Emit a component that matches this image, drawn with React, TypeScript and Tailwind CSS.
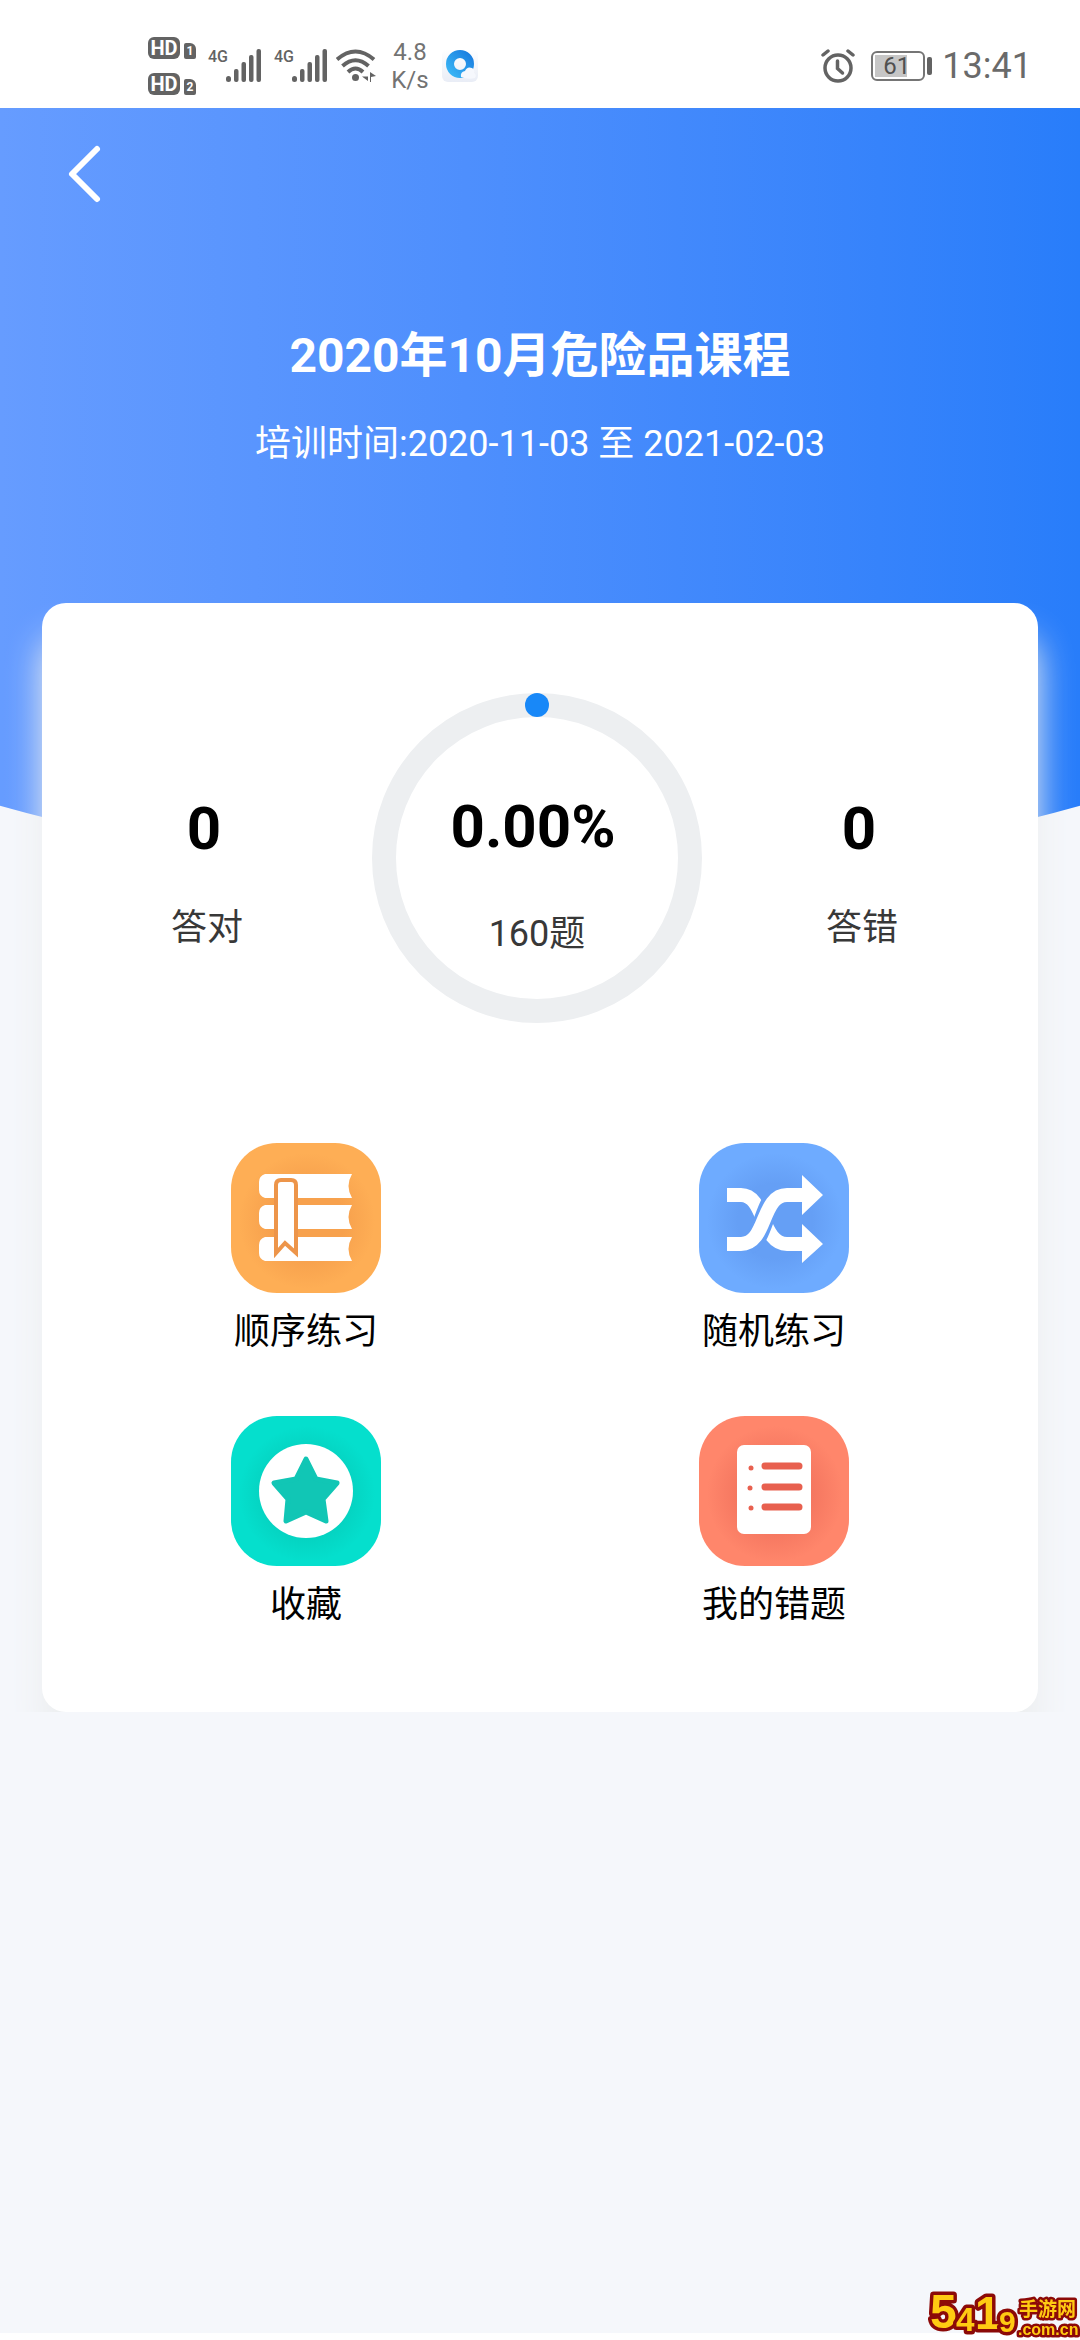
import React from "react";

function SimBadge({ slot }: { slot: string }) {
  return (
    <div className="flex items-end gap-1">
      <span className="flex h-[22px] w-8 items-center justify-center rounded-md bg-[#636363] text-xl leading-none font-bold text-white">
        HD
      </span>
      <span className="flex h-4 w-3 items-center justify-center rounded-xs rounded-tr-md bg-[#636363] text-xs leading-none font-bold text-white">
        {slot}
      </span>
    </div>
  );
}

function Signal() {
  return (
    <div className="flex items-start">
      <span className="w-[18px] font-[Roboto,sans-serif] text-base leading-4 font-medium">4G</span>
      <svg width="36" height="34" viewBox="0 0 36 34" fill="#636363" aria-hidden="true">
        <rect x="0" y="27" width="5" height="6" rx="2.5" />
        <rect x="8" y="20" width="4.5" height="13" rx="2" />
        <rect x="15.500" y="13" width="4.500" height="20" rx="2" />
        <rect x="23" y="6" width="4.500" height="27" rx="2" />
        <rect x="30.500" y="0" width="4.500" height="33" rx="2" />
      </svg>
    </div>
  );
}

function WifiIcon() {
  return (
    <svg width="40" height="34" viewBox="0 0 40 34" fill="none" stroke="#636363" strokeWidth="4" aria-hidden="true">
      <path d="M1 10.500Q19.500 -5.500 38 10.500" />
      <path d="M6.500 17Q19.500 5.500 32.500 17" />
      <path d="M12 23Q19.500 16 27 23" />
      <circle cx="19.500" cy="28.500" r="3.500" fill="#636363" stroke="none" />
      <path d="M32 23v9l-6-4.500h6zM34 23l6 4-5 1v5h-1z" fill="#636363" stroke="none" />
    </svg>
  );
}

function BrowserIcon() {
  return (
    <svg width="36" height="34" viewBox="0 0 36 34" aria-hidden="true">
      <defs>
        <linearGradient id="qb" x1="0" y1="1" x2="1" y2="0">
          <stop offset="0" stopColor="#39b5f5" />
          <stop offset="1" stopColor="#1a7fe0" />
        </linearGradient>
        <linearGradient id="qbg" x1="0" y1="0" x2="0" y2="1">
          <stop offset="0" stopColor="#ffffff" />
          <stop offset="1" stopColor="#e9edf6" />
        </linearGradient>
      </defs>
      <rect width="36" height="33" rx="6" fill="url(#qbg)" />
      <circle cx="18" cy="15" r="10" fill="none" stroke="url(#qb)" strokeWidth="8" />
      <path d="M19 28q-1-5 4-6q2-5 7-3q3 2 2 5q3 2 1 5q-7 2-14-1z" fill="#f6f8fd" />
    </svg>
  );
}

function AlarmIcon() {
  return (
    <svg width="34" height="34" viewBox="0 0 34 34" fill="none" stroke="#636363" strokeLinecap="round" aria-hidden="true">
      <circle cx="17" cy="19" r="13" strokeWidth="3.500" />
      <path d="M16.500 12v7.500l5 4.500" strokeWidth="3.500" />
      <path d="M2 6l5-4M32 6l-5-4" strokeWidth="3.500" />
    </svg>
  );
}

function StatusBar() {
  return (
    <div className="flex h-[108px] items-center justify-between bg-white pt-6 pr-12 pl-[148px] text-[#636363]">
      <div className="flex items-center">
        <div className="flex flex-col gap-3.5">
          <SimBadge slot="1" />
          <SimBadge slot="2" />
        </div>
        <div className="ml-3 flex gap-3">
          <Signal />
          <Signal />
        </div>
        <div className="ml-2">
          <WifiIcon />
        </div>
        <div className="mr-1.5 ml-2 flex w-[52px] flex-col text-center text-2xl leading-7 text-[#737373]">
          <span>4.8</span>
          <span>K/s</span>
        </div>
        <BrowserIcon />
      </div>
      <div className="flex items-center">
        <AlarmIcon />
        <div className="ml-4 flex h-[30px] w-[54px] rounded-md border-2 border-[#757575] p-0.5">
          <div className="flex h-full w-8 items-center bg-[#c6c6c6] pl-2 text-2xl leading-none text-[#505050]">61</div>
        </div>
        <div className="ml-0.5 h-[18px] w-[5px] rounded-xs bg-[#636363]" />
        <span className="ml-2.5 text-4xl leading-[44px] text-[#6a6a6a]">13:41</span>
      </div>
    </div>
  );
}

function Tile({ id, color, shade, children }: { id: string; color: string; shade: string; children: React.ReactNode }) {
  return (
    <svg width="150" height="150" viewBox="0 0 150 150" aria-hidden="true">
      <defs>
        <radialGradient id={id}>
          <stop offset="0.55" stopColor={shade} />
          <stop offset="1" stopColor={color} />
        </radialGradient>
      </defs>
      <rect width="150" height="150" rx="46" fill={color} />
      <circle cx="76" cy="78" r="68" fill={`url(#${id})`} />
      {children}
    </svg>
  );
}

function BooksIcon() {
  const book = "M34 0H121Q114 12 121 24H34Q28 22 28 16V8Q28 2 34 0Z";
  return (
    <Tile id="books" color="#feae55" shade="#f7a14d">
      <g fill="#fff">
        <path d={book} transform="translate(0 31)" />
        <path d={book} transform="translate(0 62)" />
        <path d={book} transform="translate(0 94)" />
      </g>
      <path d="M45 110V42Q45 37 50 37H60Q65 37 65 42V110L54 100Z" fill="#fff" stroke="#ed954a" strokeWidth="4" />
    </Tile>
  );
}

function ShuffleIcon() {
  return (
    <Tile id="shuffle" color="#6eabff" shade="#659ff5">
      <path d="M28 52H42C66 52 62 101 88 101H104" fill="none" stroke="#fff" strokeWidth="14" />
      <path d="M50 101C64 96 66 57 80 52" fill="none" stroke="#659ff5" strokeWidth="20" />
      <path d="M28 101H42C68 101 62 52 88 52H104" fill="none" stroke="#fff" strokeWidth="14" />
      <path d="M103 32L124 52L103 72ZM103 81L124 101L103 120Z" fill="#fff" />
    </Tile>
  );
}

function StarIcon() {
  return (
    <Tile id="star" color="#05dfcd" shade="#05d0be">
      <circle cx="75" cy="75" r="47" fill="#fff" />
      <path
        d="M75 43L85 63L106 67L92 83L95 105L75 96L55 105L57 83L43 67L65 63Z"
        fill="#11c6b5"
        stroke="#11c6b5"
        strokeWidth="5"
        strokeLinejoin="round"
      />
    </Tile>
  );
}

function ListIcon() {
  return (
    <Tile id="list" color="#ff866b" shade="#f57760">
      <rect x="38" y="29" width="74" height="89" rx="7" fill="#fff" />
      <g stroke="#e8604f" strokeWidth="7" strokeLinecap="round">
        <path d="M66 50H100M66 71H100M66 91H100" />
      </g>
      <g fill="#e8604f">
        <circle cx="52" cy="52" r="2.500" />
        <circle cx="51" cy="72" r="2.500" />
        <circle cx="52" cy="92" r="2.500" />
      </g>
    </Tile>
  );
}

const actions = [
  { label: "顺序练习", Icon: BooksIcon },
  { label: "随机练习", Icon: ShuffleIcon },
  { label: "收藏", Icon: StarIcon },
  { label: "我的错题", Icon: ListIcon },
];

function Count({ value, label }: { value: string; label: string }) {
  return (
    <div className="flex flex-col items-center pt-[100px]">
      <span className="pr-1.5 text-6xl leading-[72px] font-bold text-black">{value}</span>
      <span className="mt-9 text-4xl leading-[54px] text-[#383838]">{label}</span>
    </div>
  );
}

function ProgressRing() {
  return (
    <div className="relative flex h-[330px] flex-col items-center pt-[98px]">
      <svg className="absolute top-0 left-1/2 -translate-x-1/2" width="330" height="330" viewBox="0 0 330 330" aria-hidden="true">
        <circle cx="165" cy="165" r="153" fill="none" stroke="#edeff1" strokeWidth="24" />
        <circle cx="165" cy="12" r="12" fill="#1888f8" />
      </svg>
      <span className="relative pr-2 text-6xl leading-[72px] font-bold text-black">0.00%</span>
      <span className="relative mt-11 text-4xl leading-[54px] text-[#383838]">160题</span>
    </div>
  );
}

function Watermark() {
  return (
    <svg
      className="fixed right-0 bottom-0"
      width="152"
      height="56"
      viewBox="0 0 152 56"
      role="img"
      aria-label="5419手游网"
      fontFamily="'Noto Sans CJK SC', sans-serif"
      fontWeight="700"
      fill="#ffcb12"
      stroke="#8c0a08"
      strokeLinejoin="round"
      paintOrder="stroke"
    >
      <g strokeWidth="7" fontFamily="'Liberation Sans', sans-serif">
        <text x="2" y="44" fontSize="48">5</text>
        <text x="28" y="47" fontSize="34">4</text>
        <text x="47" y="45" fontSize="46">1</text>
        <text x="71" y="48" fontSize="30">9</text>
      </g>
      <g strokeWidth="5">
        <text x="91" y="32" fontSize="19">手游网</text>
        <text x="90" y="51" fontSize="16" fontFamily="'Liberation Sans', sans-serif">.com.cn</text>
      </g>
    </svg>
  );
}

export default function App() {
  return (
    <div className="flex min-h-screen flex-col border-b-[7px] border-white bg-[#f5f7fb] font-[Roboto,'Noto_Sans_CJK_SC',sans-serif]">
      <StatusBar />
      <main className="relative">
        <div className="absolute inset-x-0 top-0 h-[772px] bg-linear-to-r from-[#669cff] to-[#287dfa] [clip-path:circle(2000px_at_50%_-1228px)]" />
        <header className="relative h-[495px] text-center text-white">
          <button type="button" aria-label="返回" className="absolute top-9 left-[66px]">
            <svg width="38" height="60" viewBox="0 0 38 60" fill="none" stroke="#fff" strokeWidth="6" strokeLinecap="round" strokeLinejoin="round">
              <path d="M31 5L6 30L31 55" />
            </svg>
          </button>
          <h1 className="pt-[212px] text-5xl leading-[72px] font-bold">2020年10月危险品课程</h1>
          <p className="mt-[25px] text-4xl leading-[54px]">培训时间:2020-11-03 至 2021-02-03</p>
        </header>
        <div className="relative overflow-hidden px-[42px]">
          <section className="rounded-3xl bg-white pt-[90px] pb-20 shadow-[0_34px_34px_#eceeef]">
            <div className="grid grid-cols-[33fr_33fr_32fr] pr-4">
              <Count value="0" label="答对" />
              <ProgressRing />
              <Count value="0" label="答错" />
            </div>
            <div className="mt-[120px] grid grid-cols-2 gap-y-[57px] px-[30px]">
              {actions.map(({ label, Icon }) => (
                <button key={label} type="button" className="flex flex-col items-center text-4xl leading-[54px] text-black">
                  <Icon />
                  <span className="mt-3">{label}</span>
                </button>
              ))}
            </div>
          </section>
        </div>
      </main>
      <Watermark />
    </div>
  );
}
